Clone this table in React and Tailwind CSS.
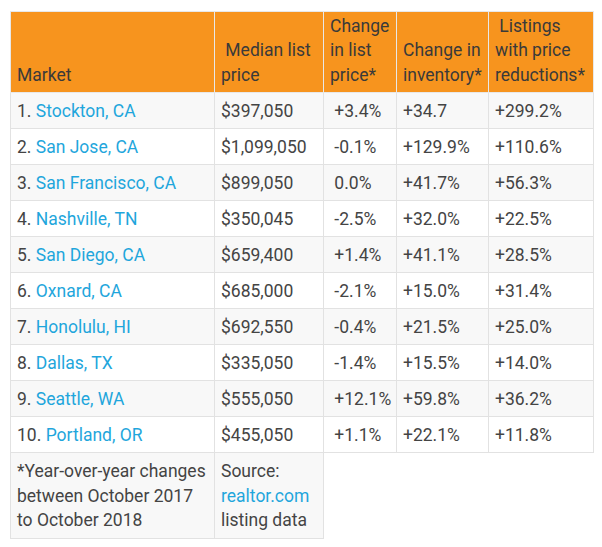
const rows = [
  ['1.', 'Stockton, CA', '$397,050', '+3.4%', '+34.7', '+299.2%'],
  ['2.', 'San Jose, CA', '$1,099,050', '-0.1%', '+129.9%', '+110.6%'],
  ['3.', 'San Francisco, CA', '$899,050', '0.0%', '+41.7%', '+56.3%'],
  ['4.', 'Nashville, TN', '$350,045', '-2.5%', '+32.0%', '+22.5%'],
  ['5.', 'San Diego, CA', '$659,400', '+1.4%', '+41.1%', '+28.5%'],
  ['6.', 'Oxnard, CA', '$685,000', '-2.1%', '+15.0%', '+31.4%'],
  ['7.', 'Honolulu, HI', '$692,550', '-0.4%', '+21.5%', '+25.0%'],
  ['8.', 'Dallas, TX', '$335,050', '-1.4%', '+15.5%', '+14.0%'],
  ['9.', 'Seattle, WA', '$555,050', '+12.1%', '+59.8%', '+36.2%'],
  ['10.', 'Portland, OR', '$455,050', '+1.1%', '+22.1%', '+11.8%'],
];

const td = 'border border-[#e2e2e2] px-[6px] pt-[6px] pb-[5px] align-middle';
const th = 'border border-[#e8e8e8] px-[6px] pt-[1.5px] pb-[5px] align-bottom text-left font-normal leading-[24.5px]';
const foot = 'border border-[#e2e2e2] px-[6px] pt-[6px] pb-[5.5px] bg-[#f8f8f8] leading-[24.5px]';

const App = () => {
  return (
    <div
      className="bg-white w-[602px] h-[547px] pt-[11px] pl-[10px] text-[#444444] text-[17.5px] leading-[24px]"
      style={{ fontFamily: 'Roboto, "Liberation Sans", sans-serif' }}
    >
      <table className="table-fixed border-collapse w-[583px]">
        <colgroup>
          <col className="w-[204px]" />
          <col className="w-[109px]" />
          <col className="w-[73px]" />
          <col className="w-[92px]" />
          <col className="w-[105px]" />
        </colgroup>
        <thead>
          <tr className="bg-[#f7941e] text-[#3a3a3a]">
            <th className={th}>Market</th>
            <th className={th}>&nbsp;Median list price</th>
            <th className={th}>Change in list price*</th>
            <th className={th}>Change in inventory*</th>
            <th className={th}>&nbsp;Listings with price reductions*</th>
          </tr>
        </thead>
        <tbody>
          {rows.map((r, i) => (
            <tr key={r[1]} className={i % 2 === 0 ? 'bg-[#f8f8f8]' : 'bg-white'}>
              <td className={td}>
                {r[0]} <a className="text-[#1fa6dc]">{r[1]}</a>
              </td>
              <td className={td}>{r[2]}</td>
              <td className={td}>&nbsp;{r[3]}</td>
              <td className={td}>{r[4]}</td>
              <td className={td}>{r[5]}</td>
            </tr>
          ))}
          <tr>
            <td className={foot}>
              *Year-over-year changes between October 2017 to October 2018
            </td>
            <td className={foot}>
              Source: <a className="text-[#1fa6dc]">realtor.com</a> listing data
            </td>
          </tr>
        </tbody>
      </table>
    </div>
  );
};

export default App;
